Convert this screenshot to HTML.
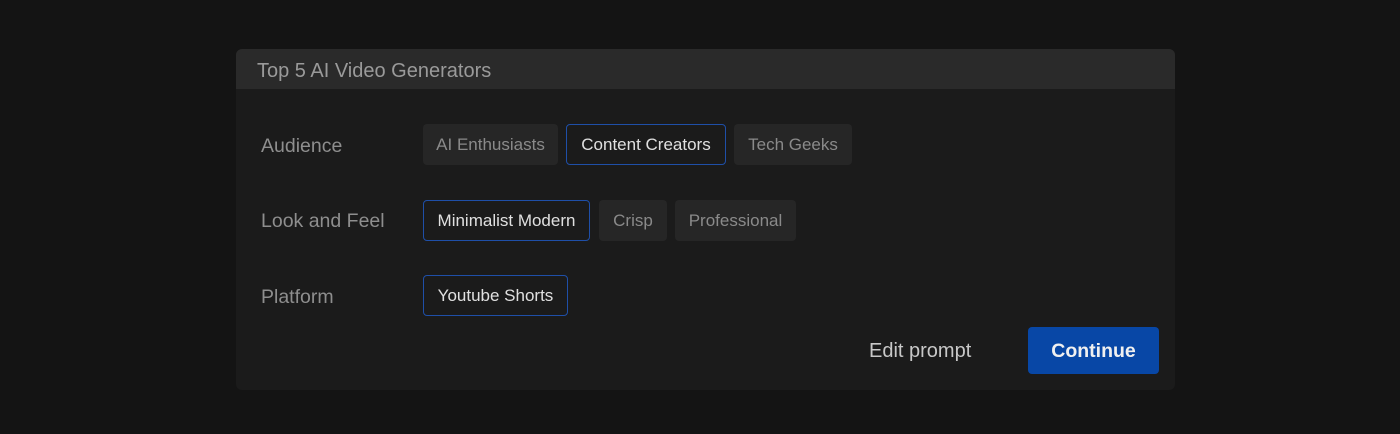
<!DOCTYPE html>
<html><head><style>
body{margin:0;width:1400px;height:434px;background:#141414;font-family:"Liberation Sans",sans-serif;position:relative;overflow:hidden}
.card{position:absolute;left:236px;top:49px;width:939px;height:341px;background:#1b1b1b;border-radius:6px;overflow:hidden}
.hd{height:40px;background:#2a2a2a;color:#9a9a9a;font-size:20px;line-height:44px;padding-left:21px}
.lbl{position:absolute;left:25px;color:#8e8e8e;font-size:19.5px}
.chip{position:absolute;height:41px;box-sizing:border-box;border-radius:4px;background:#262626;color:#8a8a8a;font-size:17px;line-height:42px;text-align:center;white-space:nowrap}
.sel{background:#1b1b1b;border:1.5px solid #1f4fa8;color:#e0e0e0;line-height:39px}
.btn{position:absolute;left:792px;top:278px;width:131px;height:47px;background:#0847a6;border-radius:4px;color:#f0f0f0;font-weight:bold;font-size:19.5px;line-height:48px;text-align:center}
.edit{position:absolute;left:633px;top:291px;color:#c8c8c8;font-size:20px}
</style></head><body>
<div class="card">
<div class="hd">Top 5 AI Video Generators</div>
<div class="lbl" style="top:86px">Audience</div>
<div class="chip" style="left:187px;top:75px;width:135px">AI Enthusiasts</div>
<div class="chip sel" style="left:330px;top:75px;width:160px">Content Creators</div>
<div class="chip" style="left:498px;top:75px;width:118px">Tech Geeks</div>
<div class="lbl" style="top:161px">Look and Feel</div>
<div class="chip sel" style="left:187px;top:151px;width:167px">Minimalist Modern</div>
<div class="chip" style="left:363px;top:151px;width:68px">Crisp</div>
<div class="chip" style="left:439px;top:151px;width:121px">Professional</div>
<div class="lbl" style="top:237px">Platform</div>
<div class="chip sel" style="left:187px;top:226px;width:145px">Youtube Shorts</div>
<div class="edit">Edit prompt</div>
<div class="btn">Continue</div>
</div>
</body></html>
